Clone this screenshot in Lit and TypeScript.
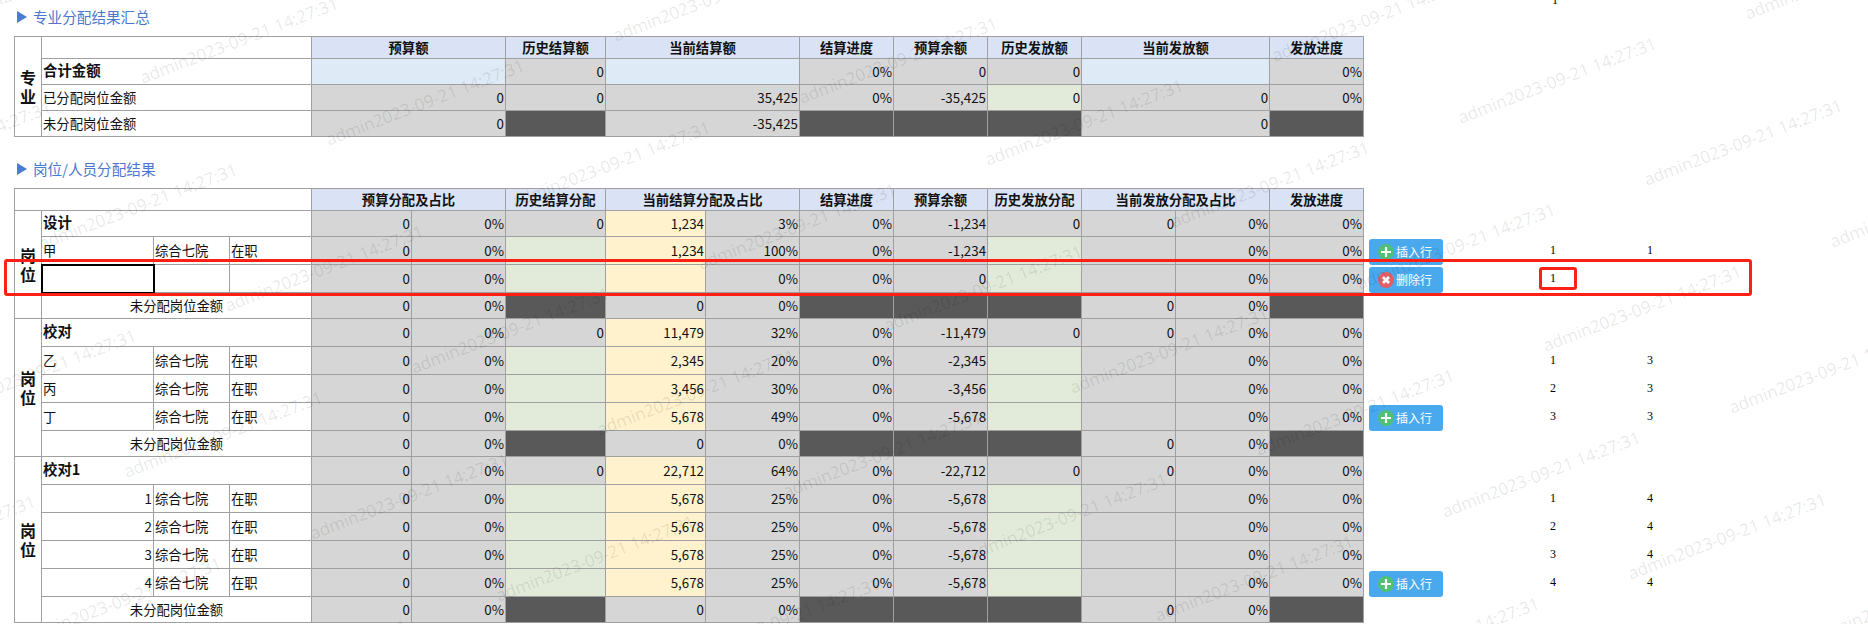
import { LitElement, html, css, svg, nothing } from "lit";
import { customElement } from "lit/decorators.js";

const COLS = [27, 112, 76, 82, 100, 94, 100, 100, 94, 94, 94, 94, 94, 94, 94];

type Person = { name: string; num?: boolean; org?: string; st?: string; cur: string; pct: string; rem: string; side?: "add" | "del"; a?: string; b?: string; sel?: boolean };
type Group = { title: string; cur: string; pct: string; rem: string; people: Person[] };

const ORG = "综合七院";
const ST = "在职";

const GROUPS: Group[] = [
  {
    title: "设计", cur: "1,234", pct: "3%", rem: "-1,234",
    people: [
      { name: "甲", org: ORG, st: ST, cur: "1,234", pct: "100%", rem: "-1,234", side: "add", a: "1", b: "1" },
      { name: "", sel: true, cur: "", pct: "0%", rem: "0", side: "del", a: "1" },
    ],
  },
  {
    title: "校对", cur: "11,479", pct: "32%", rem: "-11,479",
    people: [
      { name: "乙", org: ORG, st: ST, cur: "2,345", pct: "20%", rem: "-2,345", a: "1", b: "3" },
      { name: "丙", org: ORG, st: ST, cur: "3,456", pct: "30%", rem: "-3,456", a: "2", b: "3" },
      { name: "丁", org: ORG, st: ST, cur: "5,678", pct: "49%", rem: "-5,678", side: "add", a: "3", b: "3" },
    ],
  },
  {
    title: "校对1", cur: "22,712", pct: "64%", rem: "-22,712",
    people: [
      { name: "1", num: true, org: ORG, st: ST, cur: "5,678", pct: "25%", rem: "-5,678", a: "1", b: "4" },
      { name: "2", num: true, org: ORG, st: ST, cur: "5,678", pct: "25%", rem: "-5,678", a: "2", b: "4" },
      { name: "3", num: true, org: ORG, st: ST, cur: "5,678", pct: "25%", rem: "-5,678", a: "3", b: "4" },
      { name: "4", num: true, org: ORG, st: ST, cur: "5,678", pct: "25%", rem: "-5,678", side: "add", a: "4", b: "4" },
    ],
  },
];

const HEAD1: [string, number][] = [["预算额", 2], ["历史结算额", 1], ["当前结算额", 2], ["结算进度", 1], ["预算余额", 1], ["历史发放额", 1], ["当前发放额", 2], ["发放进度", 1]];
const HEAD2: [string, number][] = [["预算分配及占比", 2], ["历史结算分配", 1], ["当前结算分配及占比", 2], ["结算进度", 1], ["预算余额", 1], ["历史发放分配", 1], ["当前发放分配及占比", 2], ["发放进度", 1]];

const marks: { x: number; y: number }[] = [];
for (let m = -9; m <= 3; m++) {
  for (let n = -2; n <= 5; n++) {
    const x = 1653 + m * 186 + n * -101 - 96;
    const y = 42 + m * 62 + n * 166 + 38;
    if (x > -130 && x < 2000 && y > -60 && y < 690) marks.push({ x, y });
  }
}

@customElement("app-root")
export class AppRoot extends LitElement {
  static styles = css`
    :host {
      display: block;
      position: relative;
      width: 1868px;
      height: 624px;
      overflow: hidden;
      background: #fff;
      font-family: "Noto Sans CJK SC", "Liberation Sans", sans-serif;
      font-size: 13.33px;
      color: #111;
    }
    .title {
      display: flex;
      align-items: center;
      box-sizing: border-box;
      height: 36px;
      padding: 0 0 3px 17px;
      gap: 6px;
      font-size: 14.6px;
      color: #4a78cc;
    }
    .title.second {
      margin-top: 15px;
    }
    .tri {
      width: 0;
      height: 0;
      border-left: 10px solid #4a7dd0;
      border-top: 6px solid transparent;
      border-bottom: 6px solid transparent;
    }
    .stray {
      margin-left: auto;
      margin-right: 310px;
      margin-top: -33px;
      font: 12px "Liberation Serif", serif;
      color: #000;
    }
    table {
      border-collapse: collapse;
      table-layout: fixed;
      margin-left: 14px;
    }
    td, th {
      box-sizing: border-box;
      border: 1px solid #a0a0a0;
      padding: 0 1px;
      overflow: hidden;
      white-space: nowrap;
      line-height: 16px;
      font-weight: normal;
      text-align: left;
    }
    tr.h22 > * { height: 22px; }
    tr.h26 > * { height: 26px; }
    tr.h28 > * { height: 28px; }
    th.hd {
      background: #d9e3f5;
      font-weight: bold;
      font-size: 13.33px;
      text-align: center;
    }
    .label {
      font-weight: bold;
      font-size: 16px;
      line-height: 19px;
      text-align: center;
      padding: 0;
    }
    .bold { font-weight: bold; font-size: 14.4px; padding-bottom: 3px; }
    .center { text-align: center; }
    .r { text-align: right; }
    .g { background: #d6d6d6; text-align: right; }
    .d { background: #595959; }
    .blue { background: #deeaf6; }
    .green { background: #e2ebda; text-align: right; }
    .yellow { background: #fff2cc; text-align: right; }
    td.sel { outline: 2px solid #000; outline-offset: -1px; }
    td.side {
      border: none;
      padding: 0;
      text-align: center;
      font: 12px "Liberation Serif", serif;
      color: #000;
      vertical-align: middle;
    }
    td.side.btns { text-align: left; padding-left: 5px; vertical-align: bottom; }
    .btn {
      display: flex;
      align-items: center;
      gap: 2px;
      width: 74px;
      height: 26px;
      box-sizing: border-box;
      padding-left: 9px;
      border-radius: 3px;
      background: #4aa8ec;
      color: #fff;
      font: 12px "Noto Sans CJK SC", sans-serif;
    }
    .btn svg { display: block; flex: none; }
    .overlay {
      position: absolute;
      inset: 0;
      pointer-events: none;
      overflow: hidden;
    }
    .wm {
      position: absolute;
      transform: translate(-50%, -50%) rotate(-21deg);
      white-space: nowrap;
      font: 17px "Open Sans", sans-serif;
      color: rgba(0, 0, 0, 0.1);
    }
    .redbig, .redsmall {
      position: absolute;
      box-sizing: border-box;
      border: 3px solid #ff2015;
      border-radius: 3px;
    }
    .redbig { left: 4px; top: 259px; width: 1748px; height: 37px; }
    .redsmall { left: 1539px; top: 267px; width: 38px; height: 23px; }
  `;

  private colgroup(side: boolean) {
    const cols = side ? [...COLS, 141, 97, 97] : COLS;
    return html`<colgroup>${cols.map((w) => html`<col style="width:${w}px" />`)}</colgroup>`;
  }

  private tableWidth(side: boolean) {
    return COLS.reduce((a, b) => a + b, 0) + (side ? 335 : 0);
  }

  private heads(list: [string, number][]) {
    return list.map(([t, c]) => html`<th class="hd" colspan=${c}>${t}</th>`);
  }

  private button(kind: "add" | "del") {
    const add = kind === "add";
    return html`<div class="btn">
      <svg width="16" height="16" viewBox="0 0 16 16">
        <circle cx="8" cy="8" r="8" fill=${add ? "#4fc075" : "#e0606a"}></circle>
        ${add
          ? svg`<path d="M8 3v10M3 8h10" stroke="#fff" stroke-width="2.2" fill="none"></path>`
          : svg`<path d="M5 5l6 6M11 5l-6 6" stroke="#fff" stroke-width="2.8" fill="none"></path>`}
      </svg>
      <span>${add ? "插入行" : "删除行"}</span>
    </div>`;
  }

  private person(p: Person) {
    return html`<tr class="h28">
      <td class=${p.sel ? "sel" : p.num ? "r" : ""}>${p.name}</td>
      <td>${p.org ?? ""}</td>
      <td>${p.st ?? ""}</td>
      <td class="g">0</td><td class="g">0%</td>
      <td class="green"></td>
      <td class="yellow">${p.cur}</td><td class="g">${p.pct}</td>
      <td class="g">0%</td>
      <td class="g">${p.rem}</td>
      <td class="green"></td>
      <td class="g"></td><td class="g">0%</td>
      <td class="g">0%</td>
      <td class="side btns">${p.side ? this.button(p.side) : nothing}</td>
      <td class="side">${p.a ?? ""}</td>
      <td class="side">${p.b ?? ""}</td>
    </tr>`;
  }

  private group(g: Group, i: number) {
    const span = g.people.length + 2;
    return html`
      <tr class=${i === 0 ? "h26" : "h28"}>
        <td class="label" rowspan=${span}>岗<br />位</td>
        <td class="bold" colspan="3">${g.title}</td>
        <td class="g">0</td><td class="g">0%</td>
        <td class="g">0</td>
        <td class="yellow">${g.cur}</td><td class="g">${g.pct}</td>
        <td class="g">0%</td>
        <td class="g">${g.rem}</td>
        <td class="g">0</td>
        <td class="g">0</td><td class="g">0%</td>
        <td class="g">0%</td>
      </tr>
      ${g.people.map((p) => this.person(p))}
      <tr class="h26">
        <td class="center" colspan="3">未分配岗位金额</td>
        <td class="g">0</td><td class="g">0%</td>
        <td class="d"></td>
        <td class="g">0</td><td class="g">0%</td>
        <td class="d"></td><td class="d"></td><td class="d"></td>
        <td class="g">0</td><td class="g">0%</td>
        <td class="d"></td>
      </tr>
    `;
  }

  render() {
    return html`
      <div class="title"><i class="tri"></i><span>专业分配结果汇总</span><span class="stray">1</span></div>
      <table style="width:${this.tableWidth(false)}px">
        ${this.colgroup(false)}
        <tr class="h22">
          <td class="label" rowspan="4">专<br />业</td>
          <td colspan="3"></td>
          ${this.heads(HEAD1)}
        </tr>
        <tr class="h26">
          <td class="bold" colspan="3">合计金额</td>
          <td class="blue" colspan="2"></td>
          <td class="g">0</td>
          <td class="blue" colspan="2"></td>
          <td class="g">0%</td>
          <td class="g">0</td>
          <td class="g">0</td>
          <td class="blue" colspan="2"></td>
          <td class="g">0%</td>
        </tr>
        <tr class="h26">
          <td colspan="3">已分配岗位金额</td>
          <td class="g" colspan="2">0</td>
          <td class="g">0</td>
          <td class="g" colspan="2">35,425</td>
          <td class="g">0%</td>
          <td class="g">-35,425</td>
          <td class="green">0</td>
          <td class="g" colspan="2">0</td>
          <td class="g">0%</td>
        </tr>
        <tr class="h26">
          <td colspan="3">未分配岗位金额</td>
          <td class="g" colspan="2">0</td>
          <td class="d"></td>
          <td class="g" colspan="2">-35,425</td>
          <td class="d"></td><td class="d"></td><td class="d"></td>
          <td class="g" colspan="2">0</td>
          <td class="d"></td>
        </tr>
      </table>
      <div class="title second"><i class="tri"></i><span>岗位/人员分配结果</span></div>
      <table style="width:${this.tableWidth(true)}px">
        ${this.colgroup(true)}
        <tr class="h22">
          <td colspan="4"></td>
          ${this.heads(HEAD2)}
        </tr>
        ${GROUPS.map((g, i) => this.group(g, i))}
      </table>
      <div class="overlay">
        ${marks.map((m) => html`<span class="wm" style="left:${m.x}px;top:${m.y}px">admin2023-09-21 14:27:31</span>`)}
        <div class="redbig"></div>
        <div class="redsmall"></div>
      </div>
    `;
  }
}
